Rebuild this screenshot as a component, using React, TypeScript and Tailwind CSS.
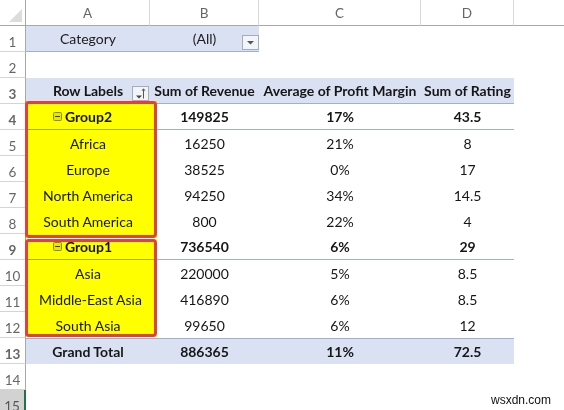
const font = "font-['Lato','Noto_Sans',sans-serif]";

type RowData = {
    n: number;
    cells?: string[];
    kind?: 'group' | 'item' | 'total' | 'head' | 'blank';
};

const rows: RowData[] = [
    { n: 4, kind: 'group', cells: ['Group2', '149825', '17%', '43.5'] },
    { n: 5, kind: 'item', cells: ['Africa', '16250', '21%', '8'] },
    { n: 6, kind: 'item', cells: ['Europe', '38525', '0%', '17'] },
    { n: 7, kind: 'item', cells: ['North America', '94250', '34%', '14.5'] },
    { n: 8, kind: 'item', cells: ['South America', '800', '22%', '4'] },
    { n: 9, kind: 'group', cells: ['Group1', '736540', '6%', '29'] },
    { n: 10, kind: 'item', cells: ['Asia', '220000', '5%', '8.5'] },
    { n: 11, kind: 'item', cells: ['Middle-East Asia', '416890', '6%', '8.5'] },
    { n: 12, kind: 'item', cells: ['South Asia', '99650', '6%', '12'] },
];

const colWidths = ['w-[124px]', 'w-[109px]', 'w-[162px]', 'w-[93px]'];

function RowHeader({ n, selected }: { n: number; selected?: boolean }) {
    return (
        <div
            className={
                'flex h-full w-[26px] shrink-0 items-end justify-center border-b border-[#d4d4d4] text-[13.5px] leading-[18px] ' +
                (selected
                    ? 'border-r-2 border-r-[#217346] bg-[#d2d2d2] text-[#555555]'
                    : 'border-r border-r-[#a8a8a8] text-[#666666]')
            }
        >
            {n}
        </div>
    );
}

function CollapseIcon() {
    return (
        <svg width="9" height="9" viewBox="0 0 9 9" className="mr-[3px] shrink-0">
            <rect x="0.5" y="0.5" width="8" height="8" rx="1" fill="#e6e67a" stroke="#8a8a50" />
            <path d="M2 4.5h5" stroke="#3a3a20" strokeWidth="1" />
        </svg>
    );
}

function FilterButton({ sort }: { sort?: boolean }) {
    return (
        <div className="flex h-[15px] w-[17px] items-center justify-center border border-[#a3adbd] bg-[#f1f4f9]">
            <svg width="15" height="13" viewBox="0 0 15 13" className="shrink-0">
                {sort ? (
                    <>
                        <path d="M3 8.5h6l-3 3z" fill="#444444" />
                        <path d="M10.5 11.5V2M9 3.8l1.5-2 1.5 2" fill="none" stroke="#555555" strokeWidth="1" />
                    </>
                ) : (
                    <path d="M4 5h7L7.5 8.5z" fill="#555555" />
                )}
            </svg>
        </div>
    );
}

function ColumnHeader() {
    return (
        <div className="flex h-[26px] text-[13.5px] text-[#666666]">
            <div className="flex w-[26px] shrink-0 items-end justify-end border-r border-b border-[#a8a8a8] pr-[3px] pb-[3px]">
                <svg width="13" height="13" viewBox="0 0 13 13">
                    <path d="M13 0v13H0z" fill="#dcdcdc" />
                </svg>
            </div>
            {['A', 'B', 'C', 'D'].map((c, i) => (
                <div
                    key={c}
                    className={colWidths[i] + ' flex shrink-0 items-center justify-center border-r border-b border-r-[#d8d8d8] border-b-[#a8a8a8] pt-[2px]'}
                >
                    {c}
                </div>
            ))}
            <div className="flex-1 border-b border-[#a8a8a8]" />
        </div>
    );
}

function DataRow({ row }: { row: RowData }) {
    const cells = row.cells ?? [];
    const bold = row.kind === 'group';
    return (
        <div className={'flex h-[26px] text-[14px] text-[#161616] ' + (bold ? 'font-bold' : '')}>
            <RowHeader n={row.n} />
            <div className={'flex ' + (bold ? 'border-b border-[#9fb1cf]' : '')}>
                {cells.map((c, i) => (
                    <div
                        key={i}
                        className={
                            colWidths[i] +
                            ' flex shrink-0 items-center justify-center ' +
                            (i === 0 && bold ? 'pr-[11px] ' : '') +
                            (c === 'Middle-East Asia' ? 'pl-[5px]' : '')
                        }
                    >
                        {i === 0 && bold && <CollapseIcon />}
                        {c}
                    </div>
                ))}
            </div>
        </div>
    );
}

function RedBox({ className }: { className: string }) {
    return (
        <>
            <div className={'absolute bg-[#ffff00] mix-blend-multiply ' + className} />
            <div className={'absolute rounded-[4px] border-[3px] border-[#e2403f] ' + className} />
        </>
    );
}

export default function App() {
    return (
        <div className={'relative h-[410px] w-[564px] overflow-hidden bg-white ' + font}>
            <ColumnHeader />

            {/* row 1: report filter */}
            <div className="flex h-[26px] text-[14px] text-[#202020]">
                <RowHeader n={1} />
                <div className="flex w-[233px] items-center border-b border-[#9fb1cf] bg-[#d9e1f2]">
                    <div className="w-[124px] text-center">Category</div>
                    <div className="relative flex h-full w-[109px] items-center justify-center">
                        (All)
                        <div className="absolute top-[9px] right-0">
                            <FilterButton />
                        </div>
                    </div>
                </div>
            </div>

            <div className="flex h-[26px]">
                <RowHeader n={2} />
            </div>

            {/* row 3: pivot header */}
            <div className="flex h-[26px] text-[14px] font-bold text-[#161616]">
                <RowHeader n={3} />
                <div className="flex items-center border-b border-[#9fb1cf] bg-[#d9e1f2]">
                    <div className="relative flex h-full w-[124px] items-center justify-center">
                        Row Labels
                        <div className="absolute top-[8px] right-[1px]">
                            <FilterButton sort />
                        </div>
                    </div>
                    {['Sum of Revenue', 'Average of Profit Margin', 'Sum of Rating'].map((c, i) => (
                        <div key={c} className={colWidths[i + 1] + ' whitespace-nowrap text-center'}>
                            {c}
                        </div>
                    ))}
                </div>
            </div>

            {rows.map((r) => (
                <DataRow key={r.n} row={r} />
            ))}

            {/* row 13: grand total */}
            <div className="flex h-[26px] text-[14px] font-bold text-[#161616]">
                <RowHeader n={13} />
                <div className="flex border-t border-[#9fb1cf] bg-[#d9e1f2]">
                    {['Grand Total', '886365', '11%', '72.5'].map((c, i) => (
                        <div key={c} className={colWidths[i] + ' flex shrink-0 items-center justify-center'}>
                            {c}
                        </div>
                    ))}
                </div>
            </div>

            <div className="flex h-[26px]">
                <RowHeader n={14} />
            </div>
            <div className="flex h-[26px]">
                <RowHeader n={15} selected />
            </div>

            {/* highlight boxes drawn over the sheet */}
            <RedBox className="top-[101px] left-[25px] h-[137px] w-[132px]" />
            <RedBox className="top-[239px] left-[25px] h-[98px] w-[132px]" />

            <div className="absolute top-[391px] left-[491px] font-['Liberation_Sans',sans-serif] text-[12px] leading-[18px] text-[#111111]">
                wsxdn.com
            </div>
        </div>
    );
}
